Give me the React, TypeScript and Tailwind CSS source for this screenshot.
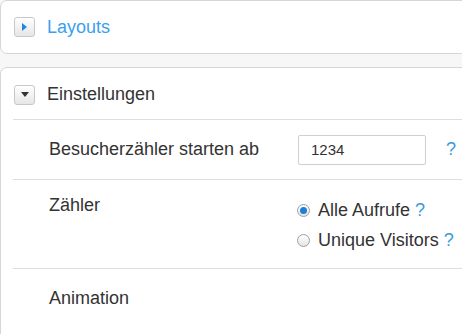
import React from 'react';

function ToggleButton({ open }: { open: boolean }) {
  return (
    <div className="w-[21px] h-[20px] rounded-[3px] border border-[#c8c8c8] bg-gradient-to-b from-white to-[#e6e6e6] flex items-center justify-center shrink-0">
      {open ? (
        <svg width="8" height="6" viewBox="0 0 8 6">
          <path d="M0 0 L8 0 L4 5 Z" fill="#333" />
        </svg>
      ) : (
        <svg width="6" height="8" viewBox="0 0 6 8">
          <path d="M0 0 L5 4 L0 8 Z" fill="#1e88e5" />
        </svg>
      )}
    </div>
  );
}

function Help() {
  return <span className="text-[#3a9ad9]">?</span>;
}

function Radio({ checked }: { checked: boolean }) {
  return (
    <span className="w-[13px] h-[13px] rounded-full border border-[#a0a0a0] bg-gradient-to-b from-white to-[#e4e4e4] flex items-center justify-center shrink-0">
      {checked && <span className="w-[7px] h-[7px] rounded-full bg-[#1e7fd8]" />}
    </span>
  );
}

export default function App() {
  return (
    <div
      className="w-[462px] h-[334px] overflow-hidden bg-[#f7f7f7] text-[18px] leading-[27px] text-[#333]"
      style={{ fontFamily: '"Liberation Sans", Arial, sans-serif' }}
    >
      <div className="w-[490px]">
        <div className="h-[54px] bg-white border border-[#d6d6d6] rounded-[7px] flex items-center gap-[12px] pl-[13px]">
          <ToggleButton open={false} />
          <span className="text-[#3a9ff0]">Layouts</span>
        </div>

        <div className="mt-[13px] bg-white border border-[#d6d6d6] rounded-t-[7px] h-[300px]">
          <div className="h-[51px] flex items-center gap-[12px] pl-[13px] pt-[2px]">
            <ToggleButton open={true} />
            <span>Einstellungen</span>
          </div>

          <div className="ml-[12px] border-t border-[#dedede] h-[60px] flex items-center">
            <span className="w-[285px] pl-[36px]">Besucherzähler starten ab</span>
            <div className="w-[128px] h-[30px] border border-[#cfcfcf] rounded-[2px] flex items-center pl-[12px] text-[15px]">
              1234
            </div>
            <span className="ml-[20px]">
              <Help />
            </span>
          </div>

          <div className="ml-[12px] border-t border-[#dedede] h-[89px] flex">
            <span className="w-[284px] pl-[36px] pt-[12px]">Zähler</span>
            <div className="flex flex-col gap-[5px] pt-[18px] leading-[25px]">
              <label className="flex items-center gap-[8px]">
                <Radio checked={true} />
                <span>
                  Alle Aufrufe <Help />
                </span>
              </label>
              <label className="flex items-center gap-[8px]">
                <Radio checked={false} />
                <span>
                  Unique Visitors <Help />
                </span>
              </label>
            </div>
          </div>

          <div className="ml-[12px] border-t border-[#dedede] flex">
            <span className="pl-[36px] pt-[16px]">Animation</span>
          </div>
        </div>
      </div>
    </div>
  );
}
